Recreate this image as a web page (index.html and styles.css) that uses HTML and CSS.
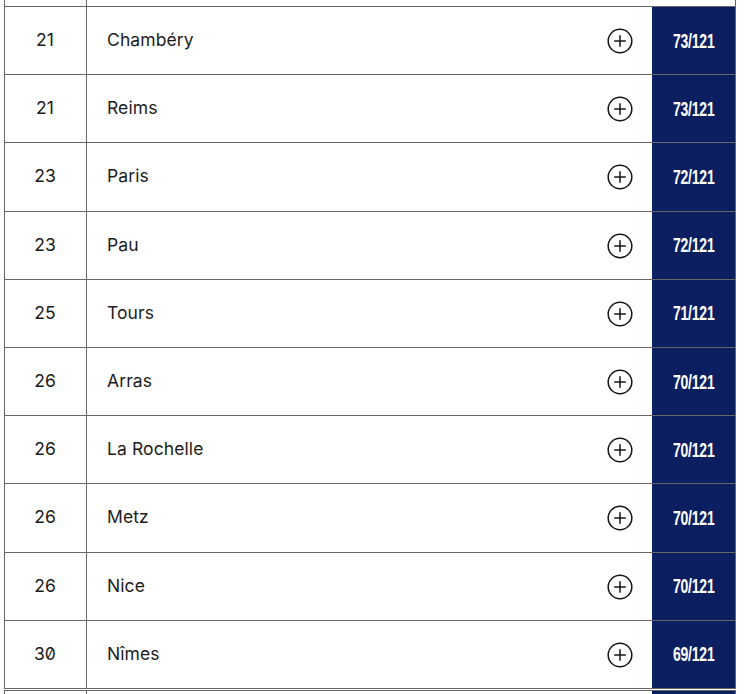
FILE: index.html
```html
<!DOCTYPE html>
<html lang="fr">
<head>
<meta charset="utf-8">
<title>Classement</title>
<link rel="stylesheet" href="styles.css">
</head>
<body>
<div class="board">
  <div class="stub"><div class="c-rank"></div><div class="c-name"></div><div class="c-tail"></div></div>
  <div class="list">
    <div class="row"><div class="rank">21</div><div class="name"><span>Chambéry</span><svg class="plus" viewBox="0 0 26 26"><circle cx="13" cy="13" r="11.8"/><path d="M13 7.2v11.6M7.2 13h11.6"/></svg></div><div class="score"><span>73/121</span></div></div>
    <div class="row"><div class="rank">21</div><div class="name"><span>Reims</span><svg class="plus" viewBox="0 0 26 26"><circle cx="13" cy="13" r="11.8"/><path d="M13 7.2v11.6M7.2 13h11.6"/></svg></div><div class="score"><span>73/121</span></div></div>
    <div class="row"><div class="rank">23</div><div class="name"><span>Paris</span><svg class="plus" viewBox="0 0 26 26"><circle cx="13" cy="13" r="11.8"/><path d="M13 7.2v11.6M7.2 13h11.6"/></svg></div><div class="score"><span>72/121</span></div></div>
    <div class="row"><div class="rank">23</div><div class="name"><span>Pau</span><svg class="plus" viewBox="0 0 26 26"><circle cx="13" cy="13" r="11.8"/><path d="M13 7.2v11.6M7.2 13h11.6"/></svg></div><div class="score"><span>72/121</span></div></div>
    <div class="row"><div class="rank">25</div><div class="name"><span>Tours</span><svg class="plus" viewBox="0 0 26 26"><circle cx="13" cy="13" r="11.8"/><path d="M13 7.2v11.6M7.2 13h11.6"/></svg></div><div class="score"><span>71/121</span></div></div>
    <div class="row"><div class="rank">26</div><div class="name"><span>Arras</span><svg class="plus" viewBox="0 0 26 26"><circle cx="13" cy="13" r="11.8"/><path d="M13 7.2v11.6M7.2 13h11.6"/></svg></div><div class="score"><span>70/121</span></div></div>
    <div class="row"><div class="rank">26</div><div class="name"><span>La Rochelle</span><svg class="plus" viewBox="0 0 26 26"><circle cx="13" cy="13" r="11.8"/><path d="M13 7.2v11.6M7.2 13h11.6"/></svg></div><div class="score"><span>70/121</span></div></div>
    <div class="row"><div class="rank">26</div><div class="name"><span>Metz</span><svg class="plus" viewBox="0 0 26 26"><circle cx="13" cy="13" r="11.8"/><path d="M13 7.2v11.6M7.2 13h11.6"/></svg></div><div class="score"><span>70/121</span></div></div>
    <div class="row"><div class="rank">26</div><div class="name"><span>Nice</span><svg class="plus" viewBox="0 0 26 26"><circle cx="13" cy="13" r="11.8"/><path d="M13 7.2v11.6M7.2 13h11.6"/></svg></div><div class="score"><span>70/121</span></div></div>
    <div class="row"><div class="rank">30</div><div class="name"><span>Nîmes</span><svg class="plus" viewBox="0 0 26 26"><circle cx="13" cy="13" r="11.8"/><path d="M13 7.2v11.6M7.2 13h11.6"/></svg></div><div class="score"><span>69/121</span></div></div>
  </div>
  <div class="next"><div class="c-rank"></div><div class="c-name"></div><div class="c-dark"></div></div>
</div>
</body>
</html>
```

FILE: styles.css
```css
html, body {
  margin: 0;
  padding: 0;
  background: #ffffff;
}

body {
  font-family: "Inter", "Noto Sans", sans-serif;
  color: #1c1c1c;
  overflow: hidden;
}

.board {
  margin-left: 4px;
  width: 732px;
}

.stub,
.row,
.next {
  display: grid;
  grid-template-columns: 82px 565px 83px;
  box-sizing: border-box;
  border-left: 1px solid #666666;
  border-right: 1px solid #666666;
}

.stub {
  height: 6px;
}

.stub .c-rank {
  border-right: 1px solid #666666;
}

.list {
  border-bottom: 1px solid #666666;
}

.row {
  height: 68.2px;
  border-top: 1px solid #666666;
}

.next {
  margin-top: 1px;
  height: 10px;
  border-top: 1px solid #666666;
}

.next .c-rank {
  border-right: 1px solid #666666;
}

.next .c-dark {
  background: #0b1e5f;
}

.rank {
  box-sizing: border-box;
  border-right: 1px solid #666666;
  display: flex;
  align-items: center;
  justify-content: center;
  font-size: 17.5px;
  font-feature-settings: "zero" 1;
  padding: 0 1px 2px 0;
}

.name {
  display: flex;
  align-items: center;
  justify-content: space-between;
  padding: 0 19px 2px 20px;
  font-size: 17.5px;
  letter-spacing: 0.1px;
}

.plus {
  width: 26px;
  height: 26px;
  fill: none;
  stroke: #161616;
  stroke-width: 1.5;
  margin-top: 3px;
}

.score {
  background: #0b1e5f;
  color: #ffffff;
  display: flex;
  align-items: center;
  justify-content: center;
  font-family: "Liberation Sans", "Arial", sans-serif;
  font-weight: bold;
  font-size: 20px;
  padding-top: 1px;
}

.score span {
  display: inline-block;
  transform: scaleX(0.7);
  letter-spacing: -0.3px;
}
```
